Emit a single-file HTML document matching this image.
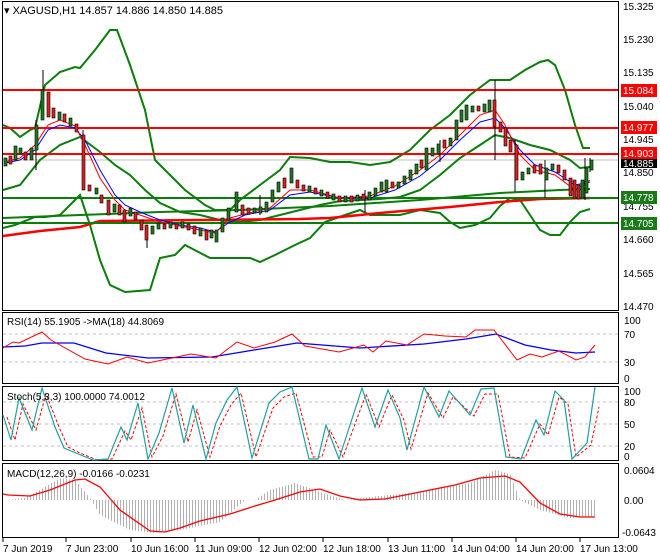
<!DOCTYPE html>
<html><head><meta charset="utf-8"><style>
body{margin:0;background:#fff;}
svg{display:block;font-family:"Liberation Sans",sans-serif;}
</style></head><body>
<svg width="660" height="560" viewBox="0 0 660 560" xmlns="http://www.w3.org/2000/svg">
<defs>
<pattern id="hs" width="3" height="10" patternUnits="userSpaceOnUse"><rect x="0" y="0" width="1" height="10" fill="#b0b0b0"/></pattern>
</defs>
<rect width="660" height="560" fill="#fff"/>
<g fill="none" stroke="#000" stroke-width="1">
<rect x="2.5" y="1.5" width="616" height="309"/>
<rect x="2.5" y="312.5" width="616" height="71"/>
<rect x="2.5" y="386.5" width="616" height="74"/>
<rect x="2.5" y="463.5" width="616" height="74"/>
</g>
<g fill="none">
<line x1="3" y1="160" x2="618" y2="160" stroke="#c0c0c0"/>
<polyline stroke="#0a7d0a" stroke-width="2" points="3,125 10,128 20,137 30,130 35,128 45,85 60,72 75,67 80,68 95,50 110,30 117,30 130,65 145,110 155,160 170,175 185,190 205,205 215,210 230,210 240,200 260,185 280,170 290,157 310,158 330,162 350,162 370,165 390,162 410,150 430,130 450,115 470,95 490,80 510,80 525,70 540,62 548,60 555,65 565,90 575,125 583,148 590,148"/>
<polyline stroke="#0a7d0a" stroke-width="2" points="3,228 15,225 35,217 45,217 60,215 75,200 80,195 90,225 100,260 110,285 125,292 150,290 160,258 175,255 185,245 210,258 230,258 250,258 260,262 275,255 295,245 310,238 325,222 345,215 360,210 370,215 385,215 400,215 420,210 440,213 450,222 460,228 475,225 490,218 500,206 510,198 520,200 530,215 540,230 550,235 560,235 570,222 580,212 590,209"/>
<polyline stroke="#0a7d0a" stroke-width="2" points="3,190 20,185 40,160 60,145 80,137 100,152 115,165 130,175 145,190 160,203 180,212 200,215 220,220 240,222 260,220 280,215 300,210 320,205 340,201 360,200 380,199 400,197 420,190 440,175 460,158 480,145 495,135 510,138 530,145 550,150 570,160 580,168 590,167"/>
<polyline stroke="#0a7d0a" stroke-width="2" points="3,218 80,215 160,212 240,210 330,206 420,200 500,193 560,190 590,189"/>
<polyline stroke="#f00" stroke-width="2.5" points="3,236 40,231 80,227 100,221 200,220 300,219 330,218 380,213 450,207 500,202 540,199 590,198"/>
<line x1="3" y1="90" x2="618" y2="90" stroke="#f00" stroke-width="2"/>
<line x1="3" y1="128" x2="618" y2="128" stroke="#f00" stroke-width="2"/>
<line x1="3" y1="154" x2="618" y2="154" stroke="#f00" stroke-width="2"/>
<line x1="3" y1="198" x2="618" y2="198" stroke="#0a7d0a" stroke-width="2"/>
<line x1="3" y1="223" x2="618" y2="223" stroke="#0a7d0a" stroke-width="2"/>
<polyline stroke="#00f" stroke-width="1" points="5,163 20,160 35,150 48,130 60,125 75,128 85,140 100,170 115,195 125,205 140,212 160,220 180,225 200,228 215,232 230,222 245,215 270,210 290,195 310,192 340,198 370,198 395,190 420,176 440,160 460,140 480,122 495,118 505,128 520,150 535,165 555,172 575,185 590,182"/>
<polyline stroke="#f00" stroke-width="1" points="5,162 20,158 35,145 48,125 60,120 75,126 85,145 100,178 115,200 125,210 140,215 160,222 180,226 200,230 215,233 230,218 245,214 270,208 290,190 310,190 340,198 370,196 395,186 420,170 440,155 460,135 480,115 495,110 505,125 520,155 535,170 555,175 575,190 590,180"/>
</g>
<g stroke="#000" stroke-width="1">
<line x1="43" y1="70" x2="43" y2="120"/><line x1="495" y1="80" x2="495" y2="160"/><line x1="83" y1="130" x2="83" y2="190"/><line x1="147" y1="225" x2="147" y2="248"/><line x1="585" y1="158" x2="585" y2="200"/><line x1="590" y1="158" x2="590" y2="172"/>
<line x1="36" y1="120" x2="36" y2="170"/><line x1="515" y1="140" x2="515" y2="192"/><line x1="260" y1="195" x2="260" y2="215"/><line x1="365" y1="190" x2="365" y2="212"/><line x1="440" y1="140" x2="440" y2="162"/><line x1="545" y1="160" x2="545" y2="198"/>
</g>
<g stroke="#000" stroke-width="0.6">
<rect x="4" y="158" width="3" height="8" fill="#1f7a1f"/><rect x="9" y="156" width="3" height="8" fill="#e02020"/><rect x="14" y="146" width="3" height="14" fill="#1f7a1f"/><rect x="19" y="148" width="3" height="6" fill="#1f7a1f"/><rect x="24" y="152" width="3" height="8" fill="#e02020"/><rect x="30" y="148" width="3" height="12" fill="#1f7a1f"/><rect x="35" y="125" width="3" height="25" fill="#1f7a1f"/><rect x="41" y="90" width="3" height="30" fill="#1f7a1f"/><rect x="47" y="92" width="3" height="25" fill="#e02020"/><rect x="52" y="108" width="3" height="10" fill="#e02020"/><rect x="58" y="112" width="3" height="8" fill="#1f7a1f"/><rect x="63" y="114" width="3" height="8" fill="#e02020"/><rect x="69" y="118" width="3" height="8" fill="#1f7a1f"/><rect x="75" y="124" width="3" height="8" fill="#e02020"/><rect x="82" y="135" width="3" height="55" fill="#e02020"/><rect x="88" y="185" width="3" height="6" fill="#e02020"/><rect x="95" y="188" width="3" height="6" fill="#1f7a1f"/><rect x="100" y="195" width="3" height="8" fill="#e02020"/><rect x="107" y="200" width="3" height="15" fill="#e02020"/><rect x="113" y="204" width="3" height="8" fill="#1f7a1f"/><rect x="118" y="205" width="3" height="10" fill="#e02020"/><rect x="123" y="210" width="3" height="12" fill="#e02020"/><rect x="129" y="208" width="3" height="8" fill="#1f7a1f"/><rect x="134" y="212" width="3" height="8" fill="#e02020"/><rect x="140" y="220" width="3" height="10" fill="#e02020"/><rect x="145" y="225" width="3" height="15" fill="#e02020"/><rect x="151" y="226" width="3" height="8" fill="#1f7a1f"/><rect x="157" y="223" width="3" height="6" fill="#1f7a1f"/><rect x="163" y="224" width="3" height="5" fill="#e02020"/><rect x="169" y="222" width="3" height="6" fill="#1f7a1f"/><rect x="175" y="224" width="3" height="5" fill="#e02020"/><rect x="181" y="222" width="3" height="6" fill="#1f7a1f"/><rect x="187" y="224" width="3" height="6" fill="#e02020"/><rect x="193" y="226" width="3" height="8" fill="#e02020"/><rect x="199" y="228" width="3" height="8" fill="#1f7a1f"/><rect x="205" y="230" width="3" height="10" fill="#e02020"/><rect x="210" y="230" width="3" height="8" fill="#1f7a1f"/><rect x="215" y="230" width="3" height="12" fill="#1f7a1f"/><rect x="221" y="218" width="3" height="14" fill="#1f7a1f"/><rect x="227" y="208" width="3" height="12" fill="#1f7a1f"/><rect x="235" y="192" width="3" height="20" fill="#1f7a1f"/><rect x="241" y="205" width="3" height="10" fill="#e02020"/><rect x="247" y="208" width="3" height="6" fill="#e02020"/><rect x="253" y="208" width="3" height="5" fill="#1f7a1f"/><rect x="259" y="207" width="3" height="6" fill="#1f7a1f"/><rect x="265" y="202" width="3" height="10" fill="#1f7a1f"/><rect x="271" y="190" width="3" height="12" fill="#1f7a1f"/><rect x="277" y="182" width="3" height="10" fill="#1f7a1f"/><rect x="283" y="178" width="3" height="10" fill="#e02020"/><rect x="290" y="168" width="3" height="15" fill="#1f7a1f"/><rect x="296" y="180" width="3" height="8" fill="#e02020"/><rect x="302" y="185" width="3" height="6" fill="#e02020"/><rect x="308" y="186" width="3" height="6" fill="#1f7a1f"/><rect x="314" y="188" width="3" height="6" fill="#e02020"/><rect x="320" y="190" width="3" height="6" fill="#1f7a1f"/><rect x="326" y="192" width="3" height="6" fill="#e02020"/><rect x="332" y="194" width="3" height="6" fill="#1f7a1f"/><rect x="338" y="196" width="3" height="6" fill="#e02020"/><rect x="344" y="196" width="3" height="6" fill="#1f7a1f"/><rect x="350" y="196" width="3" height="6" fill="#e02020"/><rect x="356" y="195" width="3" height="6" fill="#1f7a1f"/><rect x="362" y="194" width="3" height="6" fill="#e02020"/><rect x="368" y="192" width="3" height="8" fill="#1f7a1f"/><rect x="374" y="188" width="3" height="8" fill="#1f7a1f"/><rect x="380" y="182" width="3" height="10" fill="#1f7a1f"/><rect x="385" y="180" width="3" height="12" fill="#1f7a1f"/><rect x="391" y="182" width="3" height="6" fill="#e02020"/><rect x="397" y="182" width="3" height="6" fill="#1f7a1f"/><rect x="403" y="176" width="3" height="8" fill="#1f7a1f"/><rect x="409" y="170" width="3" height="10" fill="#1f7a1f"/><rect x="415" y="164" width="3" height="10" fill="#1f7a1f"/><rect x="420" y="160" width="3" height="8" fill="#e02020"/><rect x="425" y="148" width="3" height="22" fill="#1f7a1f"/><rect x="431" y="148" width="3" height="8" fill="#1f7a1f"/><rect x="437" y="144" width="3" height="10" fill="#1f7a1f"/><rect x="443" y="140" width="3" height="8" fill="#e02020"/><rect x="449" y="138" width="3" height="8" fill="#1f7a1f"/><rect x="455" y="120" width="3" height="20" fill="#1f7a1f"/><rect x="460" y="110" width="3" height="12" fill="#1f7a1f"/><rect x="465" y="105" width="3" height="15" fill="#1f7a1f"/><rect x="471" y="106" width="3" height="6" fill="#1f7a1f"/><rect x="477" y="106" width="3" height="5" fill="#e02020"/><rect x="483" y="104" width="3" height="8" fill="#1f7a1f"/><rect x="488" y="100" width="3" height="12" fill="#1f7a1f"/><rect x="493" y="100" width="3" height="27" fill="#e02020"/><rect x="499" y="122" width="3" height="10" fill="#e02020"/><rect x="504" y="128" width="3" height="18" fill="#e02020"/><rect x="509" y="140" width="3" height="12" fill="#e02020"/><rect x="515" y="145" width="3" height="35" fill="#e02020"/><rect x="521" y="172" width="3" height="8" fill="#1f7a1f"/><rect x="527" y="168" width="3" height="6" fill="#1f7a1f"/><rect x="533" y="165" width="3" height="8" fill="#e02020"/><rect x="539" y="164" width="3" height="10" fill="#e02020"/><rect x="545" y="168" width="3" height="12" fill="#1f7a1f"/><rect x="551" y="164" width="3" height="6" fill="#1f7a1f"/><rect x="557" y="165" width="3" height="8" fill="#e02020"/><rect x="563" y="170" width="3" height="10" fill="#e02020"/><rect x="569" y="178" width="3" height="18" fill="#e02020"/><rect x="573" y="180" width="3" height="18" fill="#e02020"/><rect x="577" y="185" width="3" height="14" fill="#e02020"/><rect x="581" y="180" width="3" height="18" fill="#1f7a1f"/><rect x="585" y="168" width="3" height="25" fill="#1f7a1f"/><rect x="590" y="160" width="3" height="10" fill="#1f7a1f"/>
</g>
<text x="4" y="14" font-size="11">▾ XAGUSD,H1  14.857 14.886 14.850 14.885</text>
<g font-size="10" fill="#000">
<text x="623" y="10">15.325</text><text x="623" y="43">15.230</text><text x="623" y="76">15.135</text><text x="623" y="110">15.040</text><text x="623" y="143">14.945</text><text x="623" y="176">14.850</text><text x="623" y="210">14.755</text><text x="623" y="243">14.660</text><text x="623" y="277">14.565</text><text x="623" y="310">14.470</text>
</g>
<rect x="621" y="84" width="36" height="13" fill="#f00"/><text x="623" y="94" font-size="10" fill="#fff">15.084</text>
<rect x="621" y="121" width="36" height="13" fill="#f00"/><text x="623" y="131" font-size="10" fill="#fff">14.977</text>
<rect x="621" y="147" width="36" height="12" fill="#f00"/><text x="623" y="157" font-size="10" fill="#fff">14.903</text>
<rect x="621" y="159" width="36" height="9" fill="#000"/><text x="623" y="167" font-size="10" fill="#fff">14.885</text>
<rect x="621" y="191" width="36" height="13" fill="#1a7a1a"/><text x="623" y="201" font-size="10" fill="#fff">14.778</text>
<rect x="621" y="217" width="36" height="13" fill="#1a7a1a"/><text x="623" y="227" font-size="10" fill="#fff">14.705</text>
<g stroke="#c0c0c0" stroke-dasharray="3,3"><line x1="3" y1="334" x2="618" y2="334"/><line x1="3" y1="362" x2="618" y2="362"/></g>
<polyline fill="none" stroke="#00f" stroke-width="1.3" points="3,347 25,346 42,343 74,343 106,353 148,358 212,357 254,350 297,343 360,348 424,344 466,339 496,334 525,345 551,350 576,353 595,352"/>
<polyline fill="none" stroke="#f00" stroke-width="1" points="3,348 13,342 19,343 42,332 51,340 85,359 108,364 127,357 148,363 191,354 216,358 237,342 254,348 275,342 292,334 305,346 339,352 364,345 373,352 386,341 407,345 424,334 445,336 466,337 475,330 494,330 517,360 530,354 542,357 559,351 576,360 585,357 595,345"/>
<text x="7" y="325" font-size="10">RSI(14) 55.1905  -&gt;MA(18) 44.8069</text>
<g font-size="10"><text x="624" y="324">100</text><text x="624" y="338">70</text><text x="624" y="366">30</text><text x="624" y="382">0</text></g>
<g stroke="#c0c0c0" stroke-dasharray="3,3"><line x1="3" y1="402" x2="618" y2="402"/><line x1="3" y1="424" x2="618" y2="424"/><line x1="3" y1="446" x2="618" y2="446"/></g>
<polyline fill="none" stroke="#f00" stroke-dasharray="3,2" stroke-width="1" transform="translate(4,2)" points="3,415 11,438 19,402 32,428 42,392 55,425 64,445 76,451 93,458 108,457 121,429 127,438 138,406 148,455 159,434 172,392 184,440 193,408 206,455 216,424 227,403 237,391 252,455 269,406 280,395 292,391 309,455 318,455 326,428 339,455 362,392 375,425 388,393 400,418 407,447 424,391 439,416 449,395 470,414 481,392 494,392 506,455 521,456 536,422 544,433 555,395 564,402 572,455 587,443 595,405"/>
<polyline fill="none" stroke="#20a0a0" stroke-width="1.2" points="3,415 11,440 19,398 32,430 42,388 55,427 64,448 76,453 93,460 108,459 121,427 127,440 138,403 148,459 159,433 172,388 184,443 193,405 206,459 216,423 227,400 237,387 252,458 269,403 280,392 292,387 309,459 318,459 326,425 339,459 362,388 375,427 388,390 400,418 407,450 424,387 439,417 449,391 470,415 481,389 494,388 506,457 521,459 536,420 544,435 555,391 564,400 572,459 587,443 595,387"/>
<text x="7" y="400" font-size="10">Stoch(5,3,3) 100.0000 74.0012</text>
<g font-size="10"><text x="624" y="395">100</text><text x="624" y="406">80</text><text x="624" y="428">50</text><text x="624" y="450">20</text><text x="624" y="460">0</text></g>
<polygon fill="url(#hs)" points="8,500 25,498 40,490 60,478 75,480 90,498 100,515 130,530 155,533 180,530 220,522 245,500 255,500 270,490 295,483 320,492 345,500 380,496 420,492 470,483 495,470 510,474 520,500 540,510 570,518 595,516 595,500 8,500"/>
<polyline fill="none" stroke="#f00" stroke-width="1.3" points="3,494 8,495 30,496 50,490 75,480 85,479 100,487 120,510 150,531 165,532 180,528 200,521 230,514 255,506 275,500 300,492 320,489 340,496 360,500 385,499 420,492 455,485 480,478 505,476 520,482 540,503 560,514 580,517 595,517"/>
<text x="7" y="477" font-size="10">MACD(12,26,9) -0.0166 -0.0231</text>
<g font-size="10"><text x="624" y="474">0.0604</text><text x="624" y="504">0.00</text><text x="622" y="536">-0.0643</text></g>
<g stroke="#000"><line x1="3" y1="538" x2="3" y2="542"/><line x1="66" y1="538" x2="66" y2="542"/><line x1="131" y1="538" x2="131" y2="542"/><line x1="195" y1="538" x2="195" y2="542"/><line x1="259" y1="538" x2="259" y2="542"/><line x1="323" y1="538" x2="323" y2="542"/><line x1="388" y1="538" x2="388" y2="542"/><line x1="452" y1="538" x2="452" y2="542"/><line x1="516" y1="538" x2="516" y2="542"/><line x1="580" y1="538" x2="580" y2="542"/></g>
<g font-size="10"><text x="3" y="552">7 Jun 2019</text><text x="66" y="552">7 Jun 23:00</text><text x="131" y="552">10 Jun 16:00</text><text x="195" y="552">11 Jun 09:00</text><text x="259" y="552">12 Jun 02:00</text><text x="323" y="552">12 Jun 18:00</text><text x="388" y="552">13 Jun 11:00</text><text x="452" y="552">14 Jun 04:00</text><text x="516" y="552">14 Jun 20:00</text><text x="580" y="552">17 Jun 13:00</text></g>
</svg>
</body></html>
